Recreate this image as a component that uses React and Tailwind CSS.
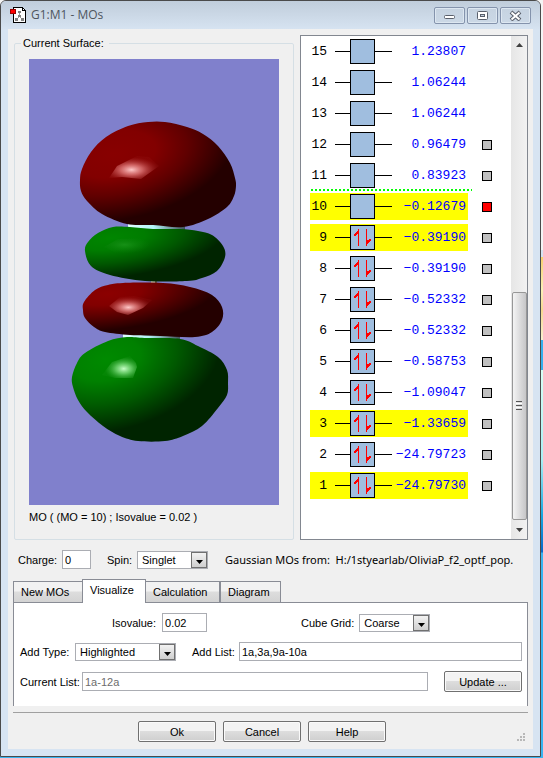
import React, { useState } from 'react';
import clsx from 'clsx';

const ORBITALS = [
    { id: 15, energy: '1.23807' },
    { id: 14, energy: '1.06244' },
    { id: 13, energy: '1.06244' },
    { id: 12, energy: '0.96479', surface: true },
    { id: 11, energy: '0.83923', surface: true },
    { id: 10, energy: '−0.12679', surface: true, highlighted: true },
    { id: 9, energy: '−0.39190', surface: true, highlighted: true, occupied: true },
    { id: 8, energy: '−0.39190', surface: true, occupied: true },
    { id: 7, energy: '−0.52332', surface: true, occupied: true },
    { id: 6, energy: '−0.52332', surface: true, occupied: true },
    { id: 5, energy: '−0.58753', surface: true, occupied: true },
    { id: 4, energy: '−1.09047', surface: true, occupied: true },
    { id: 3, energy: '−1.33659', surface: true, highlighted: true, occupied: true },
    { id: 2, energy: '−24.79723', surface: true, occupied: true },
    { id: 1, energy: '−24.79730', surface: true, highlighted: true, occupied: true },
];

const TABS = ['New MOs', 'Visualize', 'Calculation', 'Diagram'];

function TitleBar() {
    return (
        <header className="flex h-7 items-center bg-linear-to-b from-[#c0cddb] to-[#d6e3f1] px-[9px]">
            <svg width="17" height="18" viewBox="0 0 17 18" shapeRendering="crispEdges" aria-hidden="true">
                <path d="M3.5 1.5h9l3 3v12h-12z" fill="#fff" stroke="#000" />
                <path d="M12.5 1.5v3h3" fill="none" stroke="#000" />
                <path d="M9.5 6v5M9.5 10l-3 4M9.5 10l3 4" stroke="#999" fill="none" />
                <path d="M8 5h3v2H8zM8 9h3v2H8zM5 12h3v3H5zM11 12h3v3h-3z" fill="#808080" />
                <path d="M0.5 3.5h5v4h-5z" fill="#f00" stroke="#900" />
            </svg>
            <h1 className="ml-1 flex-1 font-['Open_Sans',sans-serif] text-xs text-[#4e555e]">G1:M1 - MOs</h1>
            <div className="flex gap-0.5">
                <CaptionButton label="Minimize">
                    <rect x="1.5" y="5.5" width="10" height="3" rx="1" fill="#fff" stroke="#5a606c" />
                </CaptionButton>
                <CaptionButton label="Maximize">
                    <rect x="1.5" y="1.5" width="10" height="8" rx="1" fill="#fff" stroke="#5a606c" />
                    <rect x="4.5" y="4.5" width="4" height="2" fill="#c4d0dd" stroke="#5a606c" />
                </CaptionButton>
                <CaptionButton label="Close">
                    <path d="M2 2l9 8M11 2l-9 8" stroke="#5a606c" strokeWidth="4" />
                    <path d="M2.5 2.5l8 7M10.5 2.5l-8 7" stroke="#fff" strokeWidth="2" />
                </CaptionButton>
            </div>
        </header>
    );
}

function CaptionButton({ label, children }) {
    return (
        <button
            aria-label={label}
            className="flex h-[17px] w-[31px] items-center justify-center rounded-xs border border-[#8493ac] bg-linear-to-b from-[#c6d3e1] to-[#cbd8e6] shadow-[inset_0_0_0_1px_#dde7f1]"
        >
            <svg width="13" height="11" viewBox="0 0 13 11">{children}</svg>
        </button>
    );
}

// closed Catmull-Rom curve through "x,y x,y ..." points
function smoothPath(points) {
    const p = points.split(' ').map((pair) => pair.split(',').map(Number));
    const n = p.length;
    let d = `M${p[0][0]} ${p[0][1]}`;
    for (let i = 0; i < n; i++) {
        const [a, b, c, e] = [p[(i + n - 1) % n], p[i], p[(i + 1) % n], p[(i + 2) % n]];
        const c1 = [b[0] + (c[0] - a[0]) / 6, b[1] + (c[1] - a[1]) / 6];
        const c2 = [c[0] - (e[0] - b[0]) / 6, c[1] - (e[1] - b[1]) / 6];
        d += `C${c1[0]} ${c1[1]} ${c2[0]} ${c2[1]} ${c[0]} ${c[1]}`;
    }
    return d + 'Z';
}

function Lobe({ points, fill, facet, glow }) {
    return (
        <g>
            <path d={smoothPath(points)} fill={fill} />
            <path d={facet} fill={glow} />
        </g>
    );
}

function Surface() {
    return (
        <svg viewBox="29 59 250 446" className="block h-[446px] w-full bg-[#8080cc]">
            <defs>
                <radialGradient id="red1" gradientUnits="userSpaceOnUse" cx="0" cy="0" r="1" gradientTransform="translate(114 154) rotate(-10) scale(120 66)">
                    <stop offset="0" stopColor="#880000" />
                    <stop offset="0.35" stopColor="#820000" />
                    <stop offset="0.62" stopColor="#600000" />
                    <stop offset="1" stopColor="#240000" />
                </radialGradient>
                <radialGradient id="green1" gradientUnits="userSpaceOnUse" cx="0" cy="0" r="1" gradientTransform="translate(110 238) rotate(-6) scale(118 40)">
                    <stop offset="0" stopColor="#008600" />
                    <stop offset="0.3" stopColor="#007c00" />
                    <stop offset="0.62" stopColor="#005800" />
                    <stop offset="1" stopColor="#002400" />
                </radialGradient>
                <radialGradient id="red2" gradientUnits="userSpaceOnUse" cx="0" cy="0" r="1" gradientTransform="translate(108 294) rotate(-6) scale(112 36)">
                    <stop offset="0" stopColor="#8c0000" />
                    <stop offset="0.3" stopColor="#820000" />
                    <stop offset="0.62" stopColor="#580000" />
                    <stop offset="1" stopColor="#240000" />
                </radialGradient>
                <radialGradient id="green2" gradientUnits="userSpaceOnUse" cx="0" cy="0" r="1" gradientTransform="translate(106 359) rotate(-12) scale(116 72)">
                    <stop offset="0" stopColor="#008a00" />
                    <stop offset="0.3" stopColor="#008000" />
                    <stop offset="0.62" stopColor="#005a00" />
                    <stop offset="1" stopColor="#002400" />
                </radialGradient>
                <radialGradient id="pinkGlow" cx="0.45" cy="0.6" r="0.55">
                    <stop offset="0" stopColor="#ffc8c8" />
                    <stop offset="0.4" stopColor="#e07878" stopOpacity="0.8" />
                    <stop offset="1" stopColor="#a02020" stopOpacity="0.15" />
                </radialGradient>
                <radialGradient id="limeGlow" cx="0.62" cy="0.58" r="0.55">
                    <stop offset="0" stopColor="#c8ffc8" />
                    <stop offset="0.4" stopColor="#78d878" stopOpacity="0.8" />
                    <stop offset="1" stopColor="#209820" stopOpacity="0.15" />
                </radialGradient>
                <radialGradient id="dimGlow" cx="0.4" cy="0.4">
                    <stop offset="0" stopColor="#209820" stopOpacity="0.7" />
                    <stop offset="1" stopColor="#108010" stopOpacity="0" />
                </radialGradient>
                <linearGradient id="bond">
                    <stop offset="0" stopColor="#e0ffff" />
                    <stop offset="0.45" stopColor="#b4f4f8" />
                    <stop offset="1" stopColor="#405058" />
                </linearGradient>
            </defs>
            <path d="M128 222h57v8h-57z" fill="url(#bond)" />
            <path d="M151 279h6v6h-6z" fill="#d8d8c8" />
            <path d="M155 279h2v6h-2z" fill="#686858" />
            <path d="M123 333h57v8h-57z" fill="url(#bond)" />
            <Lobe
                points="80,180 82,169 91,152 106,137 128,126 148,122 165,122 187,127 203,134 218,146 230,163 235,178 236,186 234,196 227,207 208,219 183,227 153,225 127,224 102,214 87,201 81,191"
                fill="url(#red1)"
                facet="M109 178L117 166L137 156L149 157L159 166L141 179L122 177Z"
                glow="url(#pinkGlow)"
            />
            <Lobe
                points="85,251 88,242 98,233 113,227 130,227 153,229 180,229 198,231 212,235 223,246 225,257 217,271 202,278 187,281 145,281 110,275 91,266"
                fill="url(#green1)"
                facet="M104 247L118 239L144 238L155 246L140 255L118 254Z"
                glow="url(#dimGlow)"
            />
            <Lobe
                points="83,310 84,302 95,290 108,285 123,283 163,283 190,287 212,295 222,307 222,320 212,332 195,337 160,336 130,335 105,332 94,327 85,318"
                fill="url(#red2)"
                facet="M109 306L120 297L134 296L152 300L143 308L128 315L117 312Z"
                glow="url(#pinkGlow)"
            />
            <Lobe
                points="72,377 77,363 85,353 108,341 127,337 147,338 180,339 198,346 218,357 227,370 228,383 227,395 218,408 202,426 183,436 165,441 138,441 120,436 103,426 87,412 78,400 73,387"
                fill="url(#green2)"
                facet="M102 375L112 362L130 356L136 363L137 367L133 378L115 378Z"
                glow="url(#limeGlow)"
            />
        </svg>
    );
}

function OrbitalRow({ id, energy, surface, highlighted, occupied, active, onSelect }) {
    return (
        <li className="mb-1 flex items-center">
            <div className={clsx('flex h-[27px] w-[158px] shrink-0 items-center', highlighted && 'bg-[#ffff00]')}>
                <span className="w-[17px] text-right">{id}</span>
                <span className="ml-2 h-px w-[15px] bg-black" />
                <span className="flex h-[25px] w-[25px] shrink-0 items-center justify-center border border-black bg-[#a0bedf]">
                    {occupied && (
                        <svg width="19" height="19" viewBox="0 0 19 19" fill="#ff0000" shapeRendering="crispEdges">
                            <path d="M5 1h1v17h-1z" />
                            <path d="M6 1L1 6V8H2L6 5Z" />
                            <path d="M13 1h1v17h-1z" />
                            <path d="M13 18L18 12V11H16V12H13Z" />
                        </svg>
                    )}
                </span>
                <span className="h-px w-[17px] shrink-0 bg-black" />
                <span className="w-[74px] whitespace-nowrap text-right text-[#0000ff]">{energy}</span>
            </div>
            {surface && (
                <button
                    aria-label={`Show surface ${id}`}
                    onClick={onSelect}
                    className={clsx('ml-3.5 h-2.5 w-2.5 border border-black', active ? 'bg-[#ff0000]' : 'bg-[#c0c0c0]')}
                />
            )}
        </li>
    );
}

function ScrollBar() {
    return (
        <div className="flex w-4 shrink-0 flex-col items-center bg-linear-to-r from-[#e6e6e6] to-[#f2f2f2] py-[7px]">
            <svg width="7" height="4" viewBox="0 0 7 4"><path d="M0 4L3.5 0L7 4Z" fill="#404040" /></svg>
            <div className="flex-[247]" />
            <div className="flex w-[15px] flex-[228] flex-col items-center justify-center gap-px rounded-xs border border-[#979797] bg-linear-to-r from-[#f4f4f4] to-[#c6c6c8]">
                <span className="h-px w-1.5 bg-[#555]" />
                <span className="h-px w-1.5 bg-white" />
                <span className="h-px w-1.5 bg-[#555]" />
                <span className="h-px w-1.5 bg-white" />
                <span className="h-px w-1.5 bg-[#555]" />
            </div>
            <svg className="mt-2" width="7" height="4" viewBox="0 0 7 4"><path d="M0 0L3.5 4L7 0Z" fill="#404040" /></svg>
        </div>
    );
}

function OrbitalList() {
    const [active, setActive] = useState(10);

    return (
        <div className="flex w-[228px] shrink-0 border border-[#828790] bg-white">
            <ul className="min-w-0 flex-1 pl-[9px] pt-0.5 font-['Liberation_Mono',monospace] text-[13px] leading-4">
                {ORBITALS.map((mo) => (
                    <React.Fragment key={mo.id}>
                        {mo.id === 10 && (
                            <li
                                aria-hidden="true"
                                className="-mt-1 mb-0.5 ml-px h-0.5 w-[161px] bg-[repeating-linear-gradient(90deg,#00ff00_0_2px,transparent_2px_4px)]"
                            />
                        )}
                        <OrbitalRow {...mo} active={mo.id === active} onSelect={() => setActive(mo.id)} />
                    </React.Fragment>
                ))}
            </ul>
            <ScrollBar />
        </div>
    );
}

function Select({ id, options, className }) {
    return (
        <div className={clsx('relative h-[18px] border border-[#abadb3] bg-white', className)}>
            <select id={id} className="block h-4 w-full appearance-none pl-1 pr-4 leading-4 outline-none">
                {options.map((option) => <option key={option}>{option}</option>)}
            </select>
            <span className="pointer-events-none absolute inset-y-0 right-0 flex w-4 items-center justify-center border border-[#707070] bg-linear-to-b from-[#f2f2f2] to-[#cfcfcf]">
                <svg className="mt-1" width="7" height="4" viewBox="0 0 7 4"><path d="M0 0H7L3.5 4Z" fill="#000" /></svg>
            </span>
        </div>
    );
}

function TextBox({ className, ...props }) {
    return (
        <input
            type="text"
            className={clsx('h-[19px] min-w-0 border border-[#abadb3] bg-white px-0.5 leading-4 outline-none', className)}
            {...props}
        />
    );
}

function PushButton({ children }) {
    return (
        <button className="h-[21px] w-[78px] shrink-0 rounded-xs border border-[#707070] bg-[linear-gradient(#f3f3f3_0_45%,#dddddd_50%,#cfcfcf)] leading-4 shadow-[inset_0_0_0_1px_#fafafa]">
            {children}
        </button>
    );
}

function VisualizePanel() {
    return (
        <div role="tabpanel" className="border-x border-t border-[#898c95] bg-white pb-3.5 pl-1.5 pr-[5px] pt-2.5">
            <div className="flex items-center">
                <label htmlFor="isovalue" className="ml-[92px]">Isovalue:</label>
                <TextBox id="isovalue" defaultValue="0.02" className="ml-1.5 w-[45px]" />
                <label htmlFor="grid" className="ml-[94px]">Cube Grid:</label>
                <Select id="grid" options={['Coarse', 'Medium', 'Fine']} className="ml-[5px] w-[71px]" />
            </div>
            <div className="mt-2.5 flex items-center">
                <label htmlFor="addType" className="w-[55px] shrink-0">Add Type:</label>
                <Select id="addType" options={['Highlighted', 'All', 'Occupied']} className="w-[101px] shrink-0" />
                <label htmlFor="addList" className="ml-4 w-[47px] shrink-0">Add List:</label>
                <TextBox id="addList" defaultValue="1a,3a,9a-10a" className="flex-1" />
            </div>
            <div className="mt-2.5 flex items-center">
                <label htmlFor="currentList" className="w-[62px] shrink-0">Current List:</label>
                <TextBox id="currentList" defaultValue="1a-12a" readOnly className="mr-4 flex-1 text-[#6d6d6d]" />
                <PushButton>Update ...</PushButton>
            </div>
        </div>
    );
}

function Tabs() {
    const [tab, setTab] = useState('Visualize');

    return (
        <div role="tablist" className="flex items-end">
            {TABS.map((name) => (
                <button
                    key={name}
                    role="tab"
                    aria-selected={tab === name}
                    onClick={() => setTab(name)}
                    className={clsx(
                        'border border-b-0 border-[#898c95] px-[7px] text-left leading-4',
                        tab === name
                            ? 'z-10 -mb-px h-6 bg-white pb-1'
                            : 'h-[21px] bg-[linear-gradient(#f2f2f2_0_45%,#dddddd_50%,#d3d3d3)]',
                        name === 'New MOs' && 'w-[69px] border-r-0',
                        name === 'Visualize' && 'w-16',
                        name === 'Calculation' && 'w-[74px] border-l-0',
                        name === 'Diagram' && 'w-[61px]',
                    )}
                >
                    {name}
                </button>
            ))}
        </div>
    );
}

function App() {
    return (
        <div className="bg-[linear-gradient(#f4f4f4_0_250px,#d6e3f1_250px_257px,#f8d070_257px,#fbf0b8_290px,#f6d890_310px,#faf0d0_340px,#35b0ec_340px_370px,#d8fff4_370px,#a8f0f4_460px,#18a8e0_515px,#0868c8_552px,#38b4f0_553px)] pb-px pr-0.5 font-['Liberation_Sans',Arial,sans-serif] text-[11px] leading-4 text-black">
            <div className="overflow-hidden rounded-t-md border border-[#4a4a4a] bg-[#d7e4f2]">
                <TitleBar />
                <main className="mx-[7px] mb-[7px] bg-[#f0f0f0] px-[5px] pt-1.5">
                    <section className="flex gap-1.5 pl-px">
                        <fieldset className="mt-px min-w-0 flex-1 rounded-xs border border-[#d5dfe5] px-3.5">
                            <legend className="-ml-2 w-[88px] px-0.5 leading-[14px]">Current Surface:</legend>
                            <div className="pt-[9px]">
                                <Surface />
                            </div>
                            <p className="mb-3.5 mt-1">MO ( (MO = 10) ; Isovalue = 0.02 )</p>
                        </fieldset>
                        <OrbitalList />
                    </section>

                    <section className="mt-2.5 flex items-center pl-[5px] pr-[7px]">
                        <label htmlFor="charge" className="w-11 shrink-0">Charge:</label>
                        <TextBox id="charge" defaultValue="0" className="w-[29px] shrink-0" />
                        <label htmlFor="spin" className="ml-4 w-[30px] shrink-0">Spin:</label>
                        <Select id="spin" options={['Singlet', 'Triplet']} className="w-[71px] shrink-0" />
                        <p className="ml-[17px] min-w-0 flex-1 whitespace-nowrap font-['Noto_Sans',sans-serif]">
                            Gaussian MOs from:&nbsp; H:/1styearlab/OliviaP_f2_optf_pop.
                        </p>
                    </section>

                    <section className="mt-2.5">
                        <Tabs />
                        <VisualizePanel />
                    </section>

                    <footer className="mt-1.5 flex border-t border-[#a0a0a0] pb-1.5 pt-2">
                        <div className="flex flex-1 justify-center gap-[7px]">
                            <PushButton>Ok</PushButton>
                            <PushButton>Cancel</PushButton>
                            <PushButton>Help</PushButton>
                        </div>
                        <svg className="ml-1.5 mt-3 self-start" width="11" height="10" viewBox="0 0 11 10" fill="#b8b8b8" aria-hidden="true">
                            <path d="M6 0h2v2h-2zM3 3h2v2H3zM6 3h2v2H6zM0 6h2v2H0zM3 6h2v2H3zM6 6h2v2H6z" />
                        </svg>
                    </footer>
                </main>
            </div>
        </div>
    );
}

export default App;
